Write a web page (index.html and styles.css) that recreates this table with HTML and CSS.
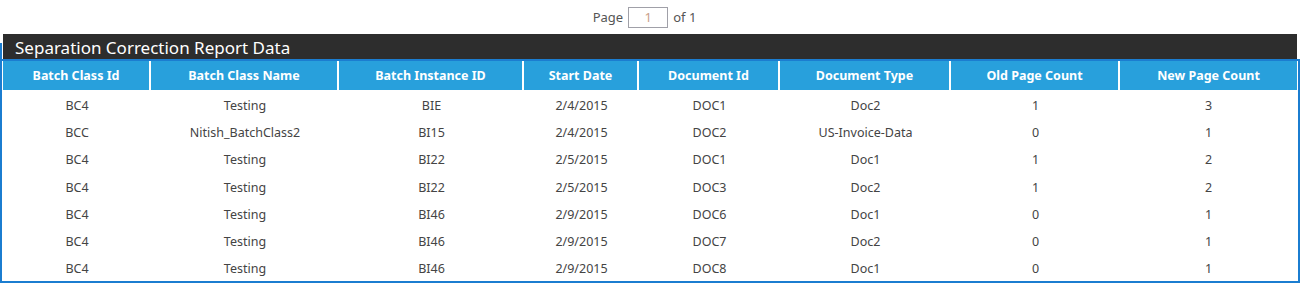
FILE: index.html
```html
<!DOCTYPE html>
<html>
<head>
<meta charset="utf-8">
<link rel="stylesheet" href="styles.css">
</head>
<body>
<div class="pager">
  <span>Page</span>
  <span class="page-input">1</span>
  <span>of 1</span>
</div>
<div class="report">
  <div class="title">Separation Correction Report Data</div>
  <div class="grid">
    <table>
      <colgroup>
        <col class="c1"><col class="c2"><col class="c3"><col class="c4">
        <col class="c5"><col class="c6"><col class="c7"><col class="c8">
      </colgroup>
      <thead>
        <tr>
          <th>Batch Class Id</th><th>Batch Class Name</th><th>Batch Instance ID</th><th>Start Date</th>
          <th>Document Id</th><th>Document Type</th><th>Old Page Count</th><th>New Page Count</th>
        </tr>
      </thead>
      <tbody>
        <tr><td>BC4</td><td>Testing</td><td>BIE</td><td>2/4/2015</td><td>DOC1</td><td>Doc2</td><td>1</td><td>3</td></tr>
        <tr><td>BCC</td><td>Nitish_BatchClass2</td><td>BI15</td><td>2/4/2015</td><td>DOC2</td><td>US-Invoice-Data</td><td>0</td><td>1</td></tr>
        <tr><td>BC4</td><td>Testing</td><td>BI22</td><td>2/5/2015</td><td>DOC1</td><td>Doc1</td><td>1</td><td>2</td></tr>
        <tr><td>BC4</td><td>Testing</td><td>BI22</td><td>2/5/2015</td><td>DOC3</td><td>Doc2</td><td>1</td><td>2</td></tr>
        <tr><td>BC4</td><td>Testing</td><td>BI46</td><td>2/9/2015</td><td>DOC6</td><td>Doc1</td><td>0</td><td>1</td></tr>
        <tr><td>BC4</td><td>Testing</td><td>BI46</td><td>2/9/2015</td><td>DOC7</td><td>Doc2</td><td>0</td><td>1</td></tr>
        <tr><td>BC4</td><td>Testing</td><td>BI46</td><td>2/9/2015</td><td>DOC8</td><td>Doc1</td><td>0</td><td>1</td></tr>
      </tbody>
    </table>
  </div>
</div>
</body>
</html>
```
FILE: styles.css
```css
html, body {
  margin: 0;
  padding: 0;
  background: #ffffff;
}
body {
  font-family: "Noto Sans", "Open Sans", sans-serif;
  color: #444444;
  font-size: 13px;
  width: 1300px;
  height: 283px;
  overflow: hidden;
}
.pager {
  height: 34px;
  display: flex;
  align-items: center;
  justify-content: center;
  gap: 5px;
  padding-right: 11px;
  box-sizing: border-box;
  color: #555555;
  font-size: 13px;
}
.page-input {
  width: 38px;
  height: 19px;
  border: 1px solid #a0a0a8;
  color: #c9a088;
  text-align: center;
  line-height: 19px;
  font-size: 13px;
}
.report {
  position: relative;
}
.report::before {
  content: "";
  position: absolute;
  left: 0;
  top: 9px;
  width: 2px;
  height: 18px;
  background: #1b7dd0;
}
.title {
  margin: 0 3px;
  height: 25px;
  background: #2d2d2d;
  color: #ffffff;
  font-size: 17px;
  line-height: 27px;
  padding-left: 12px;
  box-sizing: border-box;
  white-space: nowrap;
}
.grid {
  border: 2px solid #1b7dd0;
  padding: 0 1px;
  height: 224px;
  box-sizing: border-box;
  overflow: hidden;
}
table {
  width: 100%;
  border-collapse: separate;
  border-spacing: 0;
  table-layout: fixed;
}
.c1 { width: 148px; }
.c2 { width: 188px; }
.c3 { width: 185px; }
.c4 { width: 115px; }
.c5 { width: 141px; }
.c6 { width: 171px; }
.c7 { width: 169px; }
.c8 { width: auto; }
th {
  background: #28a0dc;
  color: #ffffff;
  font-weight: bold;
  font-size: 12.5px;
  height: 29px;
  padding: 0;
  text-align: center;
  border-right: 2px solid #ffffff;
  border-bottom: 2px solid #ffffff;
}
th:last-child {
  border-right: none;
}
td {
  height: 27.2px;
  padding: 0;
  text-align: center;
  font-size: 12.5px;
  color: #444444;
}
```
